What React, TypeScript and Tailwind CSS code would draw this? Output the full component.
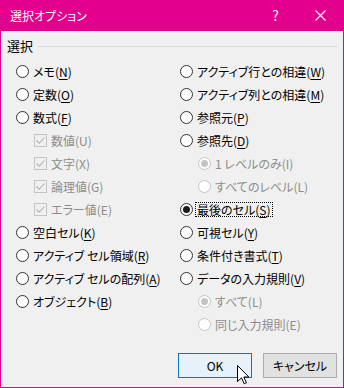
import React from 'react';

const font = { fontFamily: '"Noto Sans CJK JP", "Noto Sans", sans-serif', fontFeatureSettings: '"palt"' };

const Radio = ({ checked = false, disabled = false }: { checked?: boolean; disabled?: boolean }) => (
  <span
    className={`w-[13px] h-[13px] shrink-0 rounded-full border flex items-center justify-center bg-white ${
      disabled ? 'border-[#c4c4c4]' : 'border-[#333333]'
    }`}
  >
    {checked && (
      <span className={`w-[7px] h-[7px] rounded-full ${disabled ? 'bg-[#c4c4c4]' : 'bg-[#1a1a1a]'}`} />
    )}
  </span>
);

const Check = () => (
  <span className="w-[13px] h-[13px] shrink-0 border border-[#c4c4c4] flex items-center justify-center">
    <svg width="11" height="11" viewBox="0 0 11 11">
      <polyline points="1.5,5.5 4.2,8.2 9.5,2.5" fill="none" stroke="#b4b4b4" strokeWidth="1.1" />
    </svg>
  </span>
);

type Item = {
  text: string;
  key: string;
  kind?: 'radio' | 'check' | 'subradio';
  checked?: boolean;
  disabled?: boolean;
  focus?: boolean;
};

const Label = ({ item }: { item: Item }) => (
  <span
    className={`px-[1px] leading-[13px] border ${item.focus ? 'border-dotted border-black' : 'border-transparent'} ${
      item.disabled ? 'text-[#8d8d8d]' : 'text-black'
    }`}
  >
    {item.text}(
    {item.disabled ? item.key : <span className="underline underline-offset-[2px]">{item.key}</span>})
  </span>
);

const Row = ({ item }: { item: Item }) => (
  <div className={`h-[23px] flex items-center gap-[2px] ${item.kind && item.kind !== 'radio' ? 'pl-[18px]' : ''}`}>
    {item.kind === 'check' ? <Check /> : <Radio checked={item.checked} disabled={item.disabled} />}
    <Label item={item} />
  </div>
);

const left: Item[] = [
  { text: 'メモ', key: 'N' },
  { text: '定数', key: 'O' },
  { text: '数式', key: 'F' },
  { text: '数値', key: 'U', kind: 'check', disabled: true },
  { text: '文字', key: 'X', kind: 'check', disabled: true },
  { text: '論理値', key: 'G', kind: 'check', disabled: true },
  { text: 'エラー値', key: 'E', kind: 'check', disabled: true },
  { text: '空白セル', key: 'K' },
  { text: 'アクティブ セル領域', key: 'R' },
  { text: 'アクティブ セルの配列', key: 'A' },
  { text: 'オブジェクト', key: 'B' },
];

const right: Item[] = [
  { text: 'アクティブ行との相違', key: 'W' },
  { text: 'アクティブ列との相違', key: 'M' },
  { text: '参照元', key: 'P' },
  { text: '参照先', key: 'D' },
  { text: '1 レベルのみ', key: 'I', kind: 'subradio', disabled: true, checked: true },
  { text: 'すべてのレベル', key: 'L', kind: 'subradio', disabled: true },
  { text: '最後のセル', key: 'S', checked: true, focus: true },
  { text: '可視セル', key: 'Y' },
  { text: '条件付き書式', key: 'T' },
  { text: 'データの入力規則', key: 'V' },
  { text: 'すべて', key: 'L', kind: 'subradio', disabled: true, checked: true },
  { text: '同じ入力規則', key: 'E', kind: 'subradio', disabled: true },
];

export default function App() {
  return (
    <div
      style={font}
      className="relative w-[344px] h-[388px] bg-[#f0f0f0] border border-t-0 border-[#e3008c] text-[12px] flex flex-col overflow-hidden"
    >
      {/* title bar */}
      <div className="h-[31px] shrink-0 bg-[#e3008c] flex items-center text-white">
        <span className="pl-[9px] text-[12px]">選択オプション</span>
        <span className="ml-auto mr-[36px] text-[14px]">?</span>
        <svg width="11" height="11" viewBox="0 0 11 11" className="mr-[17px]">
          <path d="M0.5 0.5 L10.5 10.5 M10.5 0.5 L0.5 10.5" stroke="white" strokeWidth="1.2" />
        </svg>
      </div>

      {/* group header */}
      <div className="mt-[8px] h-[14px] flex items-center px-[6px] gap-[5px]">
        <span className="text-[13px] text-black leading-[14px]">選択</span>
        <div className="flex-1 h-px bg-[#d8d8d8]" />
      </div>

      {/* options */}
      <div className="mt-[7px] grid grid-cols-[164px_1fr] pl-[15px]">
        <div className="flex flex-col">
          {left.map((it, i) => (
            <Row key={i} item={it} />
          ))}
        </div>
        <div className="flex flex-col">
          {right.map((it, i) => (
            <Row key={i} item={it} />
          ))}
        </div>
      </div>

      {/* buttons */}
      <div className="mt-[17px] flex justify-end gap-[11px] pr-[6px]">
        <button className="w-[74px] h-[25px] border border-[#0078d7] bg-[#e5f1fb] text-black text-[12px]">OK</button>
        <button className="w-[74px] h-[25px] border border-[#adadad] bg-[#e1e1e1] text-black text-[12px]">キャンセル</button>
      </div>

      {/* mouse pointer */}
      <svg width="13" height="20" viewBox="0 0 13 20" className="absolute left-[236px] top-[365px]">
        <path
          d="M0.5 0.5 L0.5 16.5 L4.5 12.8 L7.2 18.8 L9.4 17.8 L6.8 12 L11.8 12 Z"
          fill="white"
          stroke="black"
          strokeWidth="1"
          strokeLinejoin="miter"
        />
      </svg>
    </div>
  );
}
